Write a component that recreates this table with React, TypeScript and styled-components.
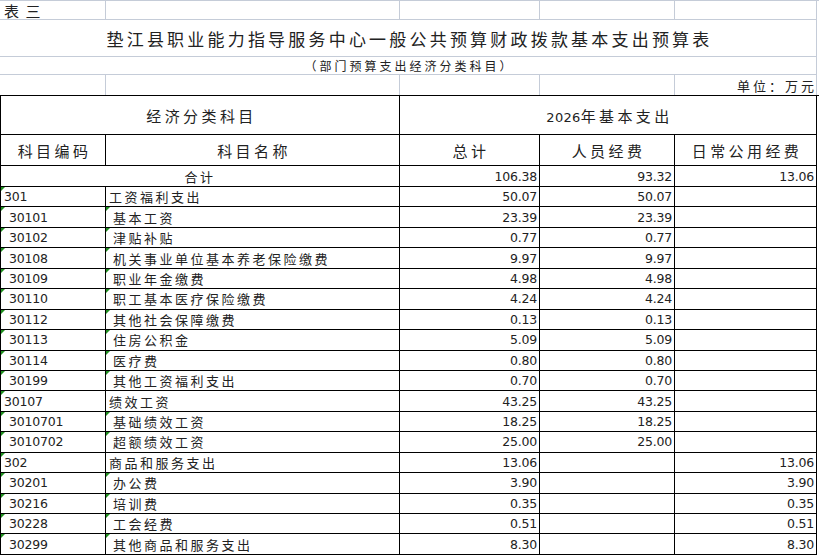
import * as React from 'react';
import styled, { createGlobalStyle } from 'styled-components';

const LIGHT = '#c5ccd8';
const DARK = '#000';
const CJK = `"Noto Sans CJK SC", sans-serif`;
const NUM = `"DejaVu Sans", "Noto Sans CJK SC", sans-serif`;
const COLS = '105px 294px 140px 135px 142px';

const GlobalStyle = createGlobalStyle`
  body {
    margin: 0;
    background: #fff;
  }
  #root {
    width: 819px;
    height: 555px;
    overflow: hidden;
  }
`;

const Page = styled.div`
  width: 819px;
  font-family: ${CJK};
  color: #222;
`;

const Heading = styled.div`
  display: grid;
  grid-template-columns: 106px 294px 140px 135px 142px;
  grid-template-rows: 19px 37px 18px 20px;
  border-top: 1px solid ${LIGHT};
`;

const HeadCell = styled.div<{ $span?: number; $align?: string; $open?: boolean }>`
  grid-column: span ${(p) => p.$span || 1};
  display: flex;
  align-items: center;
  justify-content: ${(p) => p.$align || 'flex-start'};
  border-right: 1px solid ${LIGHT};
  border-bottom: ${(p) => (p.$open ? 'none' : `1px solid ${LIGHT}`)};
  white-space: nowrap;
  overflow: visible;
`;

const Sheet = styled.div`
  display: grid;
  grid-template-columns: ${COLS};
  grid-template-rows: 39px 31px 21px repeat(18, 20.45px);
  border-top: 1px solid ${DARK};
  border-left: 1px solid ${DARK};
`;

const Cell = styled.div<{ $span?: number; $align?: string; $pad?: number; $mark?: boolean }>`
  grid-column: span ${(p) => p.$span || 1};
  position: relative;
  display: flex;
  align-items: center;
  justify-content: ${(p) => p.$align || 'flex-start'};
  padding: 0 ${(p) => (p.$align === 'flex-end' ? 2 : 0)}px 0 ${(p) => p.$pad || 0}px;
  border-right: 1px solid ${DARK};
  border-bottom: 1px solid ${DARK};
  white-space: nowrap;
  overflow: hidden;

  &::before {
    content: '';
    display: ${(p) => (p.$mark ? 'block' : 'none')};
    position: absolute;
    left: 0;
    top: 0;
    border-top: 4px solid #1f8f1f;
    border-right: 4px solid transparent;
  }
`;

const SheetLabel = styled.span`
  font-size: 15px;
  line-height: 1;
  letter-spacing: 6.5px;
  padding-left: 4px;
`;

const Title = styled.span`
  font-size: 17px;
  letter-spacing: 3.2px;
  padding-left: 3px;
`;

const Subtitle = styled.span`
  font-size: 12px;
  letter-spacing: 3px;
  padding-left: 3px;
`;

const Unit = styled.span`
  font-size: 13px;
  letter-spacing: 3px;
  margin-right: -1px;
`;

const HeadText = styled.span`
  font-size: 15px;
  letter-spacing: 3.4px;
  padding-left: 3px;
`;

const Digits = styled.span`
  font-family: ${NUM};
  font-size: 13px;
  letter-spacing: 0.3px;
`;

const Name = styled.span`
  font-size: 13px;
  letter-spacing: 2.5px;
`;

const Num = styled.span`
  font-family: ${NUM};
  font-size: 12.5px;
  letter-spacing: -0.2px;
`;

type Row = { code: string; name: string; total: string; staff: string; daily: string; top?: boolean };

const rows: Row[] = [
  { code: '301', name: '工资福利支出', total: '50.07', staff: '50.07', daily: '', top: true },
  { code: '30101', name: '基本工资', total: '23.39', staff: '23.39', daily: '' },
  { code: '30102', name: '津贴补贴', total: '0.77', staff: '0.77', daily: '' },
  { code: '30108', name: '机关事业单位基本养老保险缴费', total: '9.97', staff: '9.97', daily: '' },
  { code: '30109', name: '职业年金缴费', total: '4.98', staff: '4.98', daily: '' },
  { code: '30110', name: '职工基本医疗保险缴费', total: '4.24', staff: '4.24', daily: '' },
  { code: '30112', name: '其他社会保障缴费', total: '0.13', staff: '0.13', daily: '' },
  { code: '30113', name: '住房公积金', total: '5.09', staff: '5.09', daily: '' },
  { code: '30114', name: '医疗费', total: '0.80', staff: '0.80', daily: '' },
  { code: '30199', name: '其他工资福利支出', total: '0.70', staff: '0.70', daily: '' },
  { code: '30107', name: '绩效工资', total: '43.25', staff: '43.25', daily: '', top: true },
  { code: '3010701', name: '基础绩效工资', total: '18.25', staff: '18.25', daily: '' },
  { code: '3010702', name: '超额绩效工资', total: '25.00', staff: '25.00', daily: '' },
  { code: '302', name: '商品和服务支出', total: '13.06', staff: '', daily: '13.06', top: true },
  { code: '30201', name: '办公费', total: '3.90', staff: '', daily: '3.90' },
  { code: '30216', name: '培训费', total: '0.35', staff: '', daily: '0.35' },
  { code: '30228', name: '工会经费', total: '0.51', staff: '', daily: '0.51' },
  { code: '30299', name: '其他商品和服务支出', total: '8.30', staff: '', daily: '8.30' },
];

const NumCell = ({ value }: { value: string }) => (
  <Cell $align="flex-end">{value && <Num>{value}</Num>}</Cell>
);

export default function App() {
  return (
    <Page>
      <GlobalStyle />
      <Heading>
        <HeadCell><SheetLabel>表三</SheetLabel></HeadCell>
        <HeadCell />
        <HeadCell />
        <HeadCell />
        <HeadCell />

        <HeadCell $span={5} $align="center">
          <Title>垫江县职业能力指导服务中心一般公共预算财政拨款基本支出预算表</Title>
        </HeadCell>

        <HeadCell $span={5} $align="center">
          <Subtitle>（部门预算支出经济分类科目）</Subtitle>
        </HeadCell>

        <HeadCell $open />
        <HeadCell $open />
        <HeadCell $open />
        <HeadCell $open />
        <HeadCell $open $align="flex-end"><Unit>单位：万元</Unit></HeadCell>
      </Heading>

      <Sheet>
        <Cell $span={2} $align="center"><HeadText>经济分类科目</HeadText></Cell>
        <Cell $span={3} $align="center">
          <HeadText><Digits>2026</Digits>年基本支出</HeadText>
        </Cell>

        <Cell $align="center"><HeadText>科目编码</HeadText></Cell>
        <Cell $align="center"><HeadText>科目名称</HeadText></Cell>
        <Cell $align="center"><HeadText>总计</HeadText></Cell>
        <Cell $align="center"><HeadText>人员经费</HeadText></Cell>
        <Cell $align="center"><HeadText>日常公用经费</HeadText></Cell>

        <Cell $span={2} $align="center"><Name>合计</Name></Cell>
        <NumCell value="106.38" />
        <NumCell value="93.32" />
        <NumCell value="13.06" />

        {rows.map((r) => (
          <React.Fragment key={r.code}>
            <Cell $pad={r.top ? 3 : 8} $mark><Num>{r.code}</Num></Cell>
            <Cell $pad={r.top ? 3 : 7} $mark={!r.top}><Name>{r.name}</Name></Cell>
            <NumCell value={r.total} />
            <NumCell value={r.staff} />
            <NumCell value={r.daily} />
          </React.Fragment>
        ))}
      </Sheet>
    </Page>
  );
}
